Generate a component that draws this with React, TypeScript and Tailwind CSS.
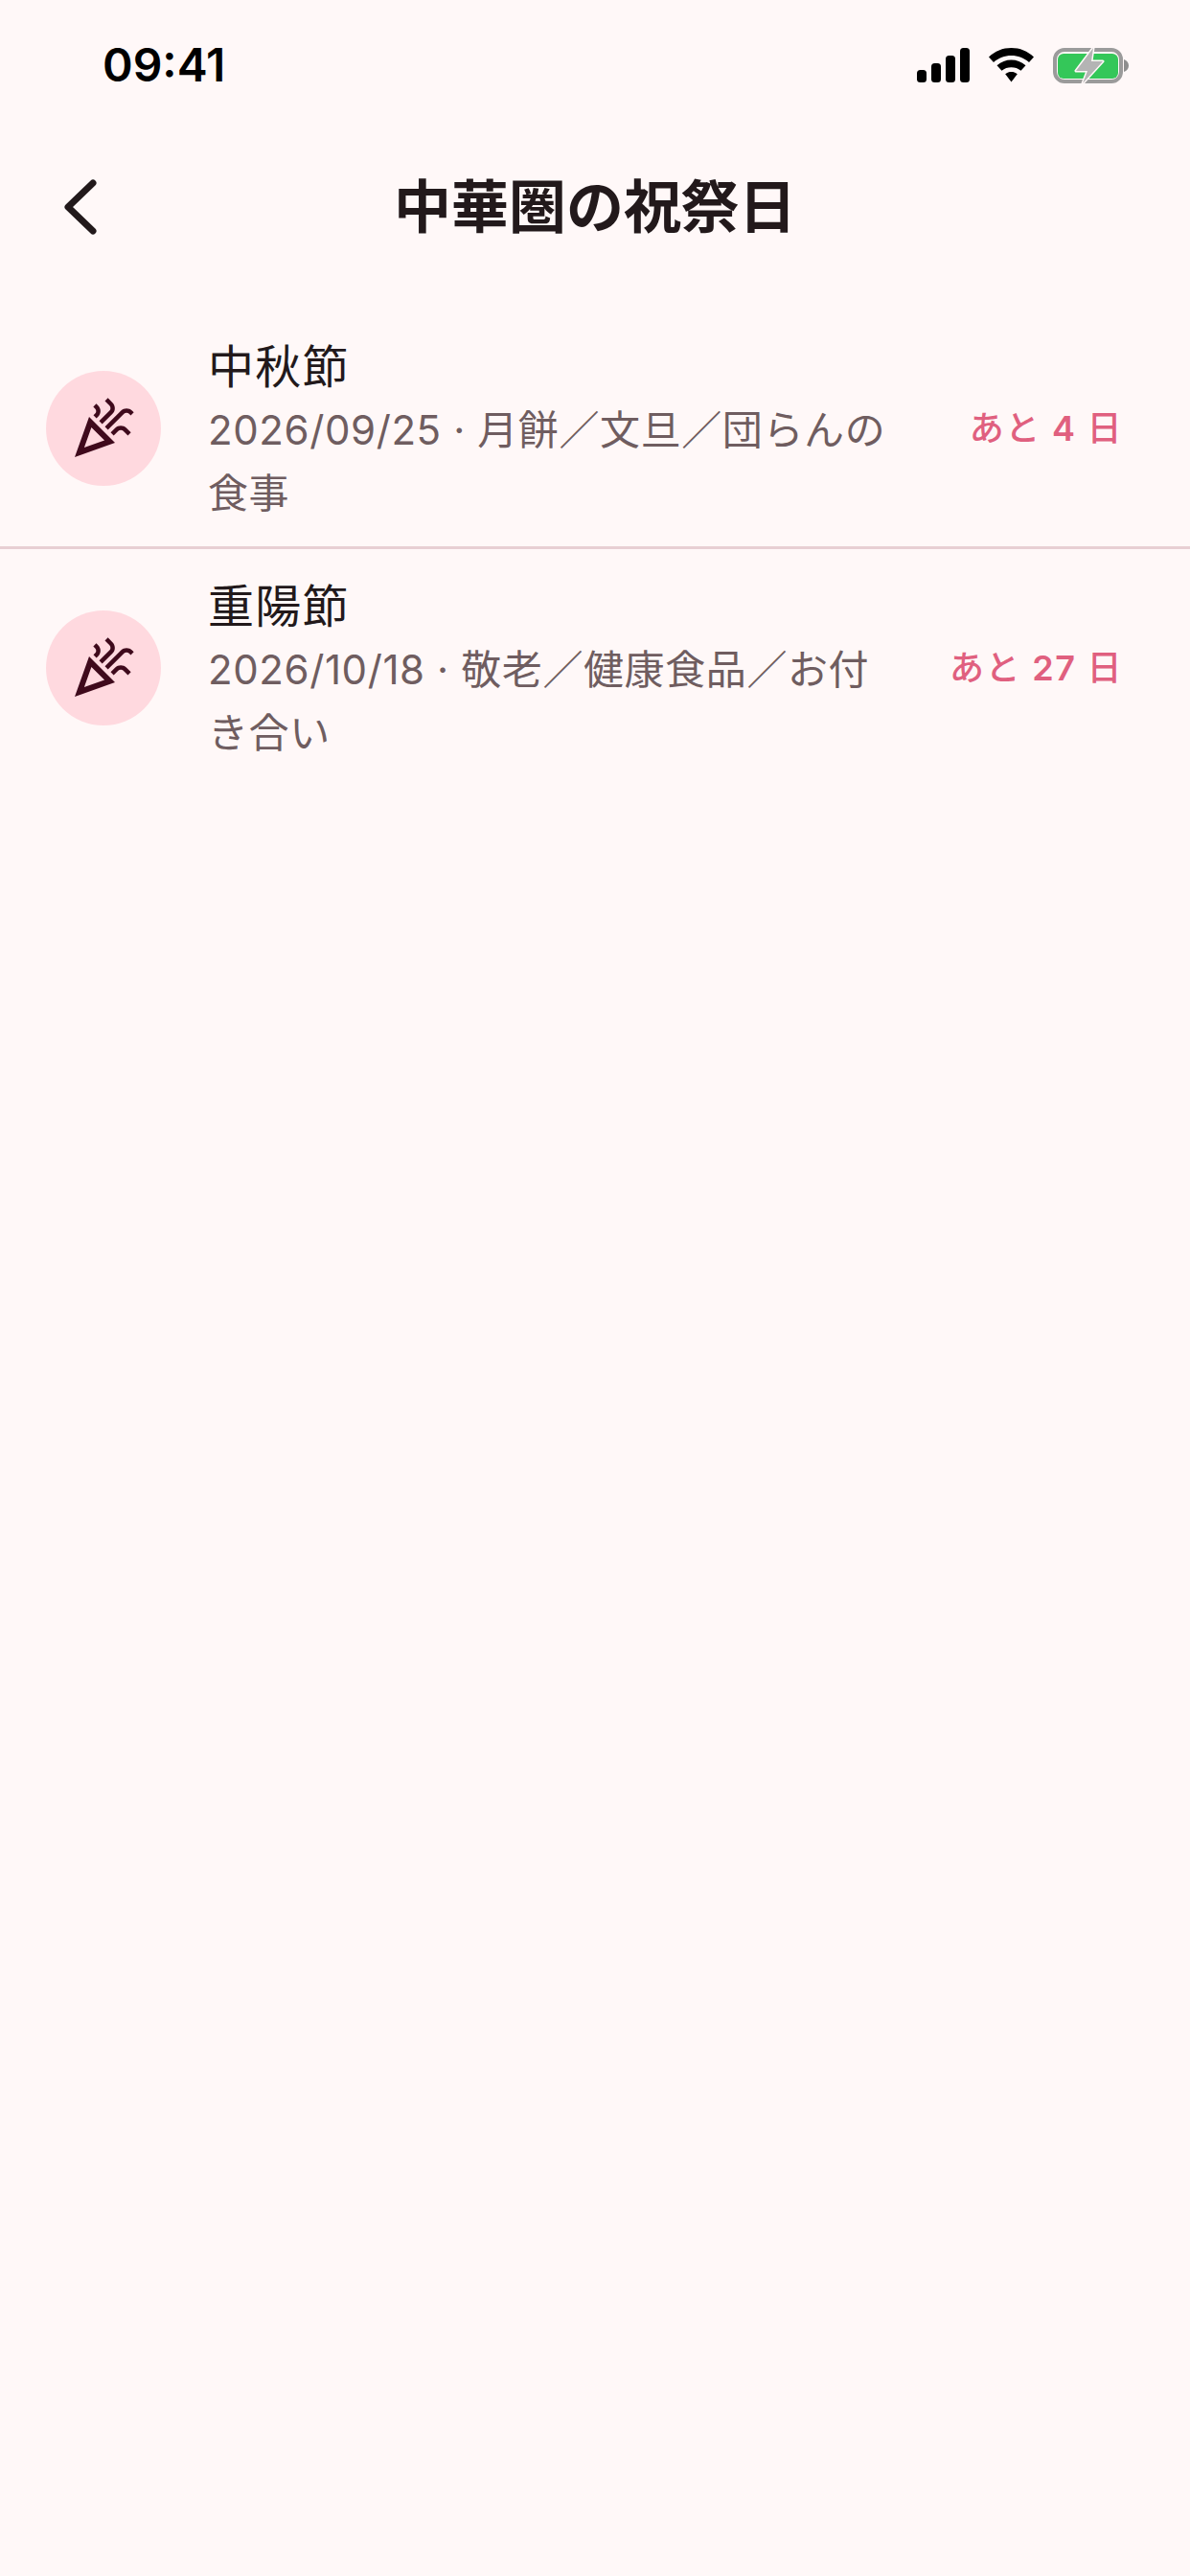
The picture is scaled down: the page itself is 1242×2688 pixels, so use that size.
const sans = "font-['Inter','Noto_Sans_CJK_JP',sans-serif]";

type Holiday = {
  name: string;
  lines: string[];
  days: number;
};

const holidays: Holiday[] = [
  { name: "中秋節", lines: ["2026/09/25 · 月餅／文旦／団らんの", "食事"], days: 4 },
  { name: "重陽節", lines: ["2026/10/18 · 敬老／健康食品／お付", "き合い"], days: 27 },
];

function StatusIcons() {
  return (
    <div className="flex items-center gap-5">
      <svg width="55" height="36" viewBox="0 0 55 36" fill="#000">
        <rect x="0" y="23" width="10" height="13" rx="3.5" />
        <rect x="15" y="16" width="10" height="20" rx="3.5" />
        <rect x="30" y="8" width="10" height="28" rx="3.5" />
        <rect x="45" y="0" width="10" height="36" rx="3.5" />
      </svg>
      <svg width="47" height="36" viewBox="0 0 47 36" fill="#000">
        <path d="M23.500 0C14.500 0 6.500 3.300 0 9.500L5 15C10.500 10.200 16.500 8 23.500 8S36.500 10.200 42 15L47 9.500C40.500 3.300 32.500 0 23.500 0Z" />
        <path d="M23.500 12.500C18.100 12.500 13 14.400 8.500 18.300L13.500 23.800C16.500 21.300 19.700 20.300 23.500 20.300S30.500 21.300 33.500 23.800L38.500 18.300C34 14.400 28.900 12.500 23.500 12.500Z" />
        <path d="M23.500 25C21.300 25 19.300 25.600 17.200 27.200L23.500 35.500L29.800 27.200C27.700 25.600 25.700 25 23.500 25Z" />
      </svg>
      <svg width="79" height="37" viewBox="0 0 79 37">
        <rect x="2" y="2" width="69" height="33" rx="10" fill="none" stroke="#9b9b9b" strokeWidth="4" />
        <rect x="5" y="6" width="63" height="26" rx="6" fill="#34c759" />
        <path d="M74 12C77 13 79 15.500 79 18.500S77 24 74 25Z" fill="#8e8e8e" />
        <path d="M42 0L24 24H36L31 37L52 14H40Z" fill="#b4b4b4" stroke="#fff8f8" strokeWidth="3" strokeLinejoin="round" paintOrder="stroke" />
      </svg>
    </div>
  );
}

function PartyIcon() {
  return (
    <svg width="72" height="72" viewBox="0 0 24 24" fill="#3f0a1c">
      <path d="M2 22l5-14 9 9-14 5zm3.300-3.300l7.050-2.500-4.550-4.550-2.500 7.050zm8.250-6.200l-1.050-1.050 5.600-5.600c.533-.533 1.175-.8 1.925-.8s1.392.267 1.925.8l.6.6-1.050 1.050-.6-.6c-.233-.233-.525-.35-.875-.35s-.642.117-.875.35l-5.600 5.600z" />
      <path d="M9.550 8.500L8.500 7.450l.6-.6c.233-.233.35-.517.35-.85s-.117-.617-.35-.85l-.65-.65L9.500 3.450l.65.65c.533.533.8 1.167.8 1.900s-.267 1.367-.8 1.900l-.6.6z" />
      <path d="M11.550 10.500L10.500 9.450l3.600-3.600c.233-.233.35-.525.35-.875s-.117-.642-.35-.875l-1.600-1.600 1.050-1.050 1.600 1.600c.533.533.8 1.175.8 1.925s-.267 1.392-.8 1.925l-3.600 3.600z" />
      <path d="M15.550 14.500L14.500 13.450l1.600-1.600c.533-.533 1.175-.8 1.925-.8s1.392.267 1.925.8l1.600 1.600-1.050 1.050-1.600-1.600c-.233-.233-.525-.35-.875-.35s-.642.117-.875.35l-1.600 1.600z" />
    </svg>
  );
}

function HolidayRow({ holiday }: { holiday: Holiday }) {
  return (
    <div className="flex items-center pl-12 pr-[70px]">
      <div className="flex h-[120px] w-[120px] shrink-0 items-center justify-center rounded-full bg-[#ffd9df]">
        <PartyIcon />
      </div>
      <div className="ml-[49px] flex-1 pt-[27px] pb-[22px]">
        <div className="text-[48px] leading-[66px] tracking-[1.2px] text-[#22191b]">{holiday.name}</div>
        {holiday.lines.map((line) => (
          <div key={line} className="text-[42px] leading-[66px] tracking-[0.6px] text-[#6f5d60]">
            {line}
          </div>
        ))}
      </div>
      <div className="text-[36px] font-medium tracking-[1.5px] text-[#e0607f]">
        あと <span className="font-semibold">{holiday.days}</span> 日
      </div>
    </div>
  );
}

export default function App() {
  return (
    <div className={`min-h-[2688px] bg-[#fff8f8] ${sans}`}>
      <div className="flex h-[136px] items-center justify-between pl-[107px] pr-[64px]">
        <span className="text-[48px] font-semibold text-black">09:41</span>
        <StatusIcons />
      </div>
      <div className="relative flex h-[160px] items-center justify-center">
        <svg className="absolute left-[64px] top-[48px]" width="40" height="64" viewBox="0 0 40 64" fill="none">
          <path d="M33 7L7 32L33 57" stroke="#22191b" strokeWidth="7" strokeLinecap="round" strokeLinejoin="round" />
        </svg>
        <h1 className="text-[60px] font-semibold text-[#22191b]">中華圏の祝祭日</h1>
      </div>
      <div className="mt-[27px]">
        <HolidayRow holiday={holidays[0]} />
        <div className="h-[3px] bg-[#e8cfd3]" />
        <HolidayRow holiday={holidays[1]} />
      </div>
    </div>
  );
}
